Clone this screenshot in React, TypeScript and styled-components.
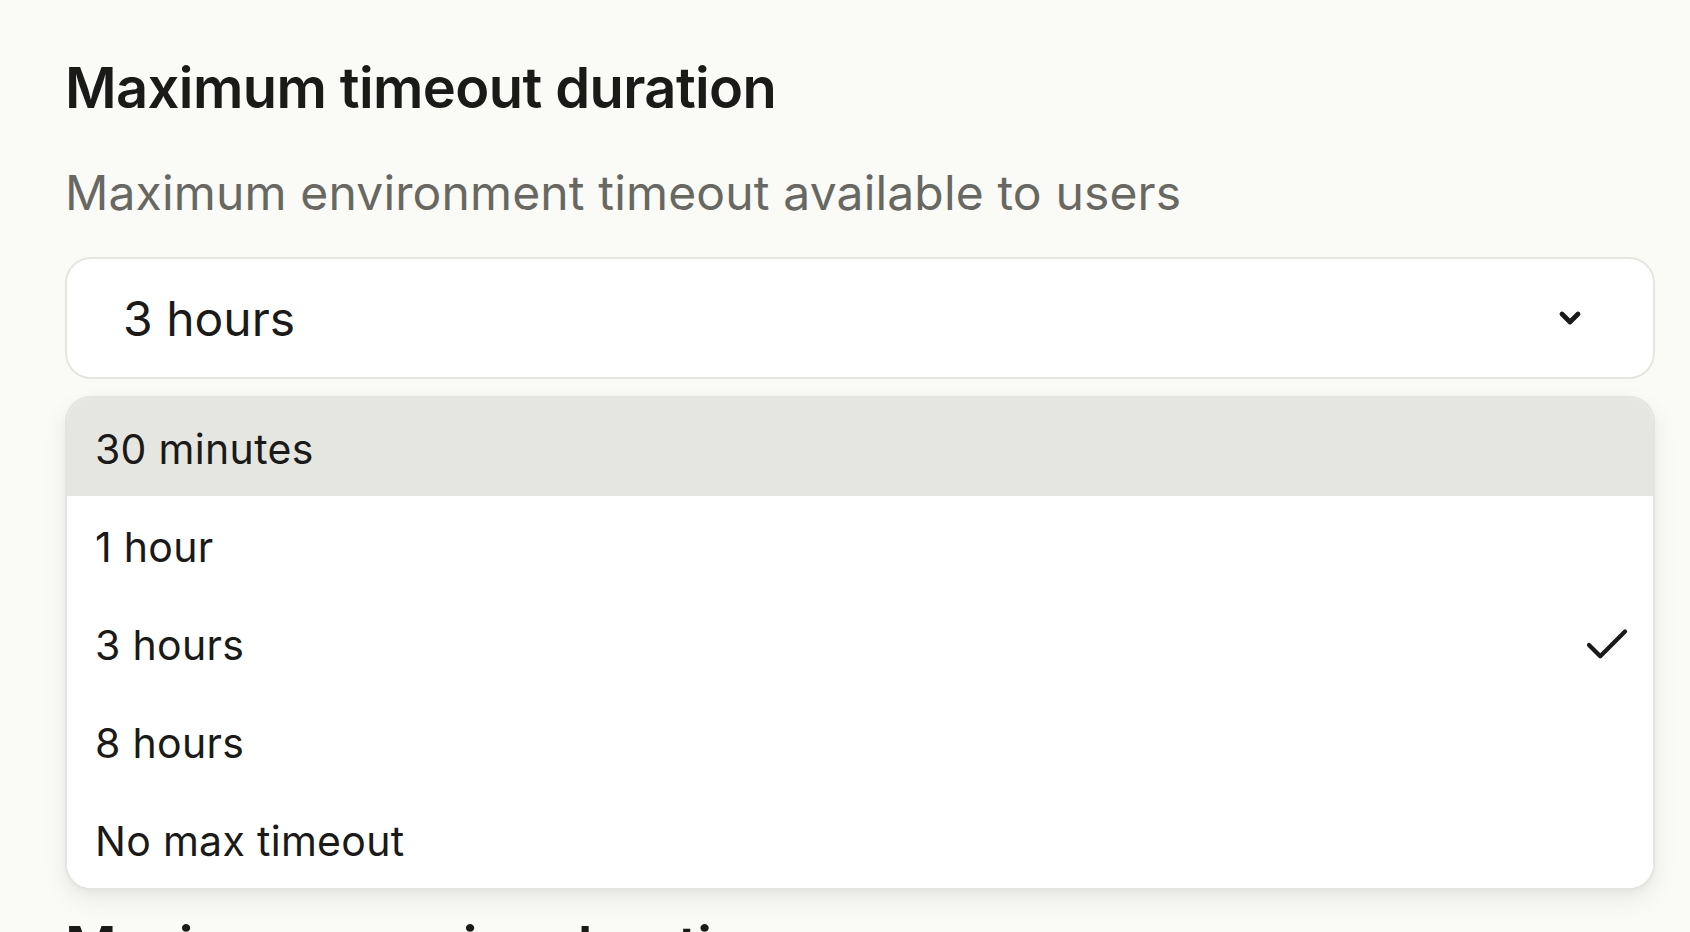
import React from "react";
import styled, { createGlobalStyle } from "styled-components";
import { Check, ChevronDown } from "lucide-react";

const GlobalStyle = createGlobalStyle`
  html, body {
    margin: 0;
    padding: 0;
    background: #fafaf6;
    font-family: Inter, "Noto Sans", "Liberation Sans", sans-serif;
    color: #1a1a19;
    overflow: hidden;
  }
  * { box-sizing: border-box; }
`;

const Page = styled.main`
  width: 1690px;
  height: 932px;
  overflow: hidden;
  padding: 55px 35px 0 65px;
  display: flex;
  flex-direction: column;
  gap: 535px;
`;

const Section = styled.section`
  display: flex;
  flex-direction: column;
`;

const Heading = styled.h2`
  margin: 0;
  font-size: 56px;
  line-height: 67px;
  font-weight: 600;
  letter-spacing: -0.6px;
  color: #1a1a19;
`;

const Subtitle = styled.p`
  margin: 37px 0 31px;
  font-size: 48px;
  line-height: 67px;
  font-weight: 400;
  letter-spacing: 0.15px;
  color: #686862;
`;

const SelectWrap = styled.div`
  position: relative;
`;

const Trigger = styled.button`
  width: 100%;
  height: 122px;
  display: flex;
  align-items: center;
  justify-content: space-between;
  padding: 0 67px 0 56px;
  background: #ffffff;
  border: 2px solid #e6e6e1;
  border-radius: 26px;
  font-family: inherit;
  font-size: 48px;
  font-weight: 400;
  color: #1a1a19;
  cursor: pointer;
`;

const Menu = styled.ul`
  position: absolute;
  top: calc(100% + 17px);
  left: 0;
  right: 0;
  margin: 0;
  padding: 0;
  list-style: none;
  background: #ffffff;
  border: 2px solid #e4e4e1;
  border-radius: 26px;
  overflow: hidden;
  box-shadow: 0 10px 24px rgba(0, 0, 0, 0.07), 0 2px 6px rgba(0, 0, 0, 0.04);
`;

const Option = styled.li<{ $active?: boolean }>`
  height: 98px;
  display: flex;
  align-items: center;
  justify-content: space-between;
  padding: 3px 19px 0 28px;
  font-size: 41px;
  font-weight: 400;
  letter-spacing: 0.3px;
  color: #1a1a19;
  background: ${(p) => (p.$active ? "#e6e6e1" : "#ffffff")};
`;

const options = ["30 minutes", "1 hour", "3 hours", "8 hours", "No max timeout"];

export default function App() {
  const selected = "3 hours";
  const highlighted = "30 minutes";
  return (
    <>
      <GlobalStyle />
      <Page>
        <Section>
          <Heading>Maximum timeout duration</Heading>
          <Subtitle>Maximum environment timeout available to users</Subtitle>
          <SelectWrap>
            <Trigger type="button">
              <span>{selected}</span>
              <ChevronDown size={32} strokeWidth={3.6} color="#1a1a19" />
            </Trigger>
            <Menu role="listbox">
              {options.map((o) => (
                <Option key={o} $active={o === highlighted} role="option">
                  <span>{o}</span>
                  {o === selected && <Check size={54} strokeWidth={1.9} color="#1a1a19" />}
                </Option>
              ))}
            </Menu>
          </SelectWrap>
        </Section>
        <Section>
          <Heading>Maximum session duration</Heading>
        </Section>
      </Page>
    </>
  );
}
